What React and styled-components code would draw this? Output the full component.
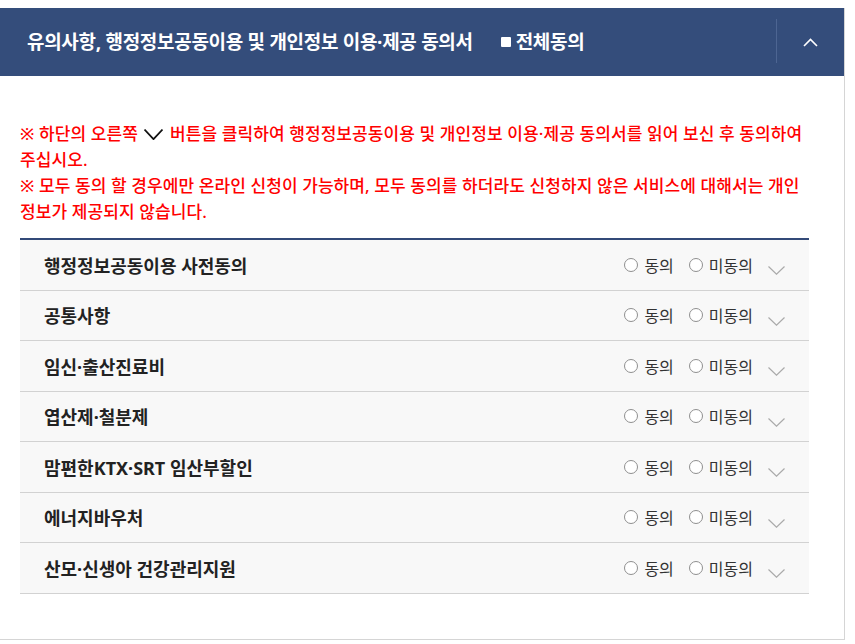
import React from 'react';
import styled, { createGlobalStyle } from 'styled-components';

const GlobalStyle = createGlobalStyle`
  body {
    margin: 0;
    background: #fff;
    font-family: "Noto Sans", "Noto Sans CJK KR", sans-serif;
  }
`;

const Page = styled.div`
  padding-top: 8px;
`;

const Panel = styled.section`
  width: 845px;
  box-sizing: border-box;
  border-right: 1px solid #d5d5d5;
  border-bottom: 1px solid #d5d5d5;
`;

const Header = styled.div`
  display: flex;
  align-items: center;
  height: 68px;
  background: #344d7b;
  color: #fff;
`;

const Title = styled.h2`
  flex: 1;
  display: flex;
  align-items: center;
  margin: 0;
  padding-left: 27px;
  font-size: 19px;
  font-weight: 700;
  letter-spacing: -0.3px;
  line-height: 1;
`;

const AllAgree = styled.label`
  display: flex;
  align-items: center;
  gap: 5px;
  margin-left: 28px;
  cursor: pointer;
`;

const Square = styled.span`
  width: 10px;
  height: 10px;
  background: #fff;
  border-radius: 1px;
`;

const Toggle = styled.button`
  position: relative;
  width: 68px;
  height: 68px;
  border: 0;
  background: transparent;
  display: flex;
  align-items: center;
  justify-content: center;
  cursor: pointer;

  &::before {
    content: '';
    position: absolute;
    left: 0;
    top: 11px;
    bottom: 13px;
    width: 1px;
    background: #4d6592;
  }
`;

const Body = styled.div`
  padding: 45px 35px 45px 20px;
`;

const Notice = styled.p`
  margin: 0;
  color: #ff0000;
  font-size: 17px;
  font-weight: 500;
  line-height: 26px;
  letter-spacing: 0.1px;

  svg {
    vertical-align: 0px;
    margin: 0 2px;
  }
`;

const Table = styled.ul`
  list-style: none;
  margin: 13px 0 0;
  padding: 0;
  border-top: 2px solid #334a78;
`;

const Row = styled.li`
  display: flex;
  align-items: center;
  height: 50.5px;
  box-sizing: border-box;
  padding: 0 24px 0 24px;
  background: #f8f8f8;
  border-bottom: 1px solid #d2d2d2;
`;

const Label = styled.span`
  flex: 1;
  font-size: 18px;
  font-weight: 700;
  color: #222;
`;

const Choice = styled.label`
  display: flex;
  align-items: center;
  gap: 6px;
  margin-right: 15px;
  font-size: 16px;
  color: #333;
  cursor: pointer;
`;

const Radio = styled.input.attrs({ type: 'radio' })`
  appearance: none;
  margin: 0;
  width: 14px;
  height: 14px;
  border: 1.5px solid #8f8f8f;
  border-radius: 50%;
  background: #fff;
  box-sizing: border-box;
`;

const Expand = styled.span`
  display: flex;
  margin-top: 12px;
`;

const items = [
  '행정정보공동이용 사전동의',
  '공통사항',
  '임신·출산진료비',
  '엽산제·철분제',
  '맘편한KTX·SRT 임산부할인',
  '에너지바우처',
  '산모·신생아 건강관리지원',
];

const ChevronDown = ({ color = '#aaa', w = 17, h = 9, stroke = 1.2 }) => (
  <svg width={w} height={h} viewBox={`0 0 ${w} ${h}`}>
    <polyline points={`0.5,0.5 ${w / 2},${h - 0.8} ${w - 0.5},0.5`} fill="none" stroke={color} strokeWidth={stroke} />
  </svg>
);

export default function App() {
  return (
    <Page>
      <GlobalStyle />
      <Panel>
        <Header>
          <Title>
            유의사항, 행정정보공동이용 및 개인정보 이용·제공 동의서
            <AllAgree>
              <Square />
              전체동의
            </AllAgree>
          </Title>
          <Toggle aria-label="접기">
            <svg width="15" height="9" viewBox="0 0 15 9">
              <polyline points="1,8 7.5,1.5 14,8" fill="none" stroke="#fff" strokeWidth="1.6" />
            </svg>
          </Toggle>
        </Header>
        <Body>
          <Notice>
            ※ 하단의 오른쪽 <ChevronDown color="#111" w={19} h={11} stroke={1.7} /> 버튼을 클릭하여 행정정보공동이용 및 개인정보 이용·제공 동의서를 읽어 보신 후 동의하여 주십시오.
          </Notice>
          <Notice>
            ※ 모두 동의 할 경우에만 온라인 신청이 가능하며, 모두 동의를 하더라도 신청하지 않은 서비스에 대해서는 개인정보가 제공되지 않습니다.
          </Notice>
          <Table>
            {items.map((name, i) => (
              <Row key={name}>
                <Label>{name}</Label>
                <Choice>
                  <Radio name={`agree-${i}`} />
                  동의
                </Choice>
                <Choice>
                  <Radio name={`agree-${i}`} />
                  미동의
                </Choice>
                <Expand>
                  <ChevronDown />
                </Expand>
              </Row>
            ))}
          </Table>
        </Body>
      </Panel>
    </Page>
  );
}
